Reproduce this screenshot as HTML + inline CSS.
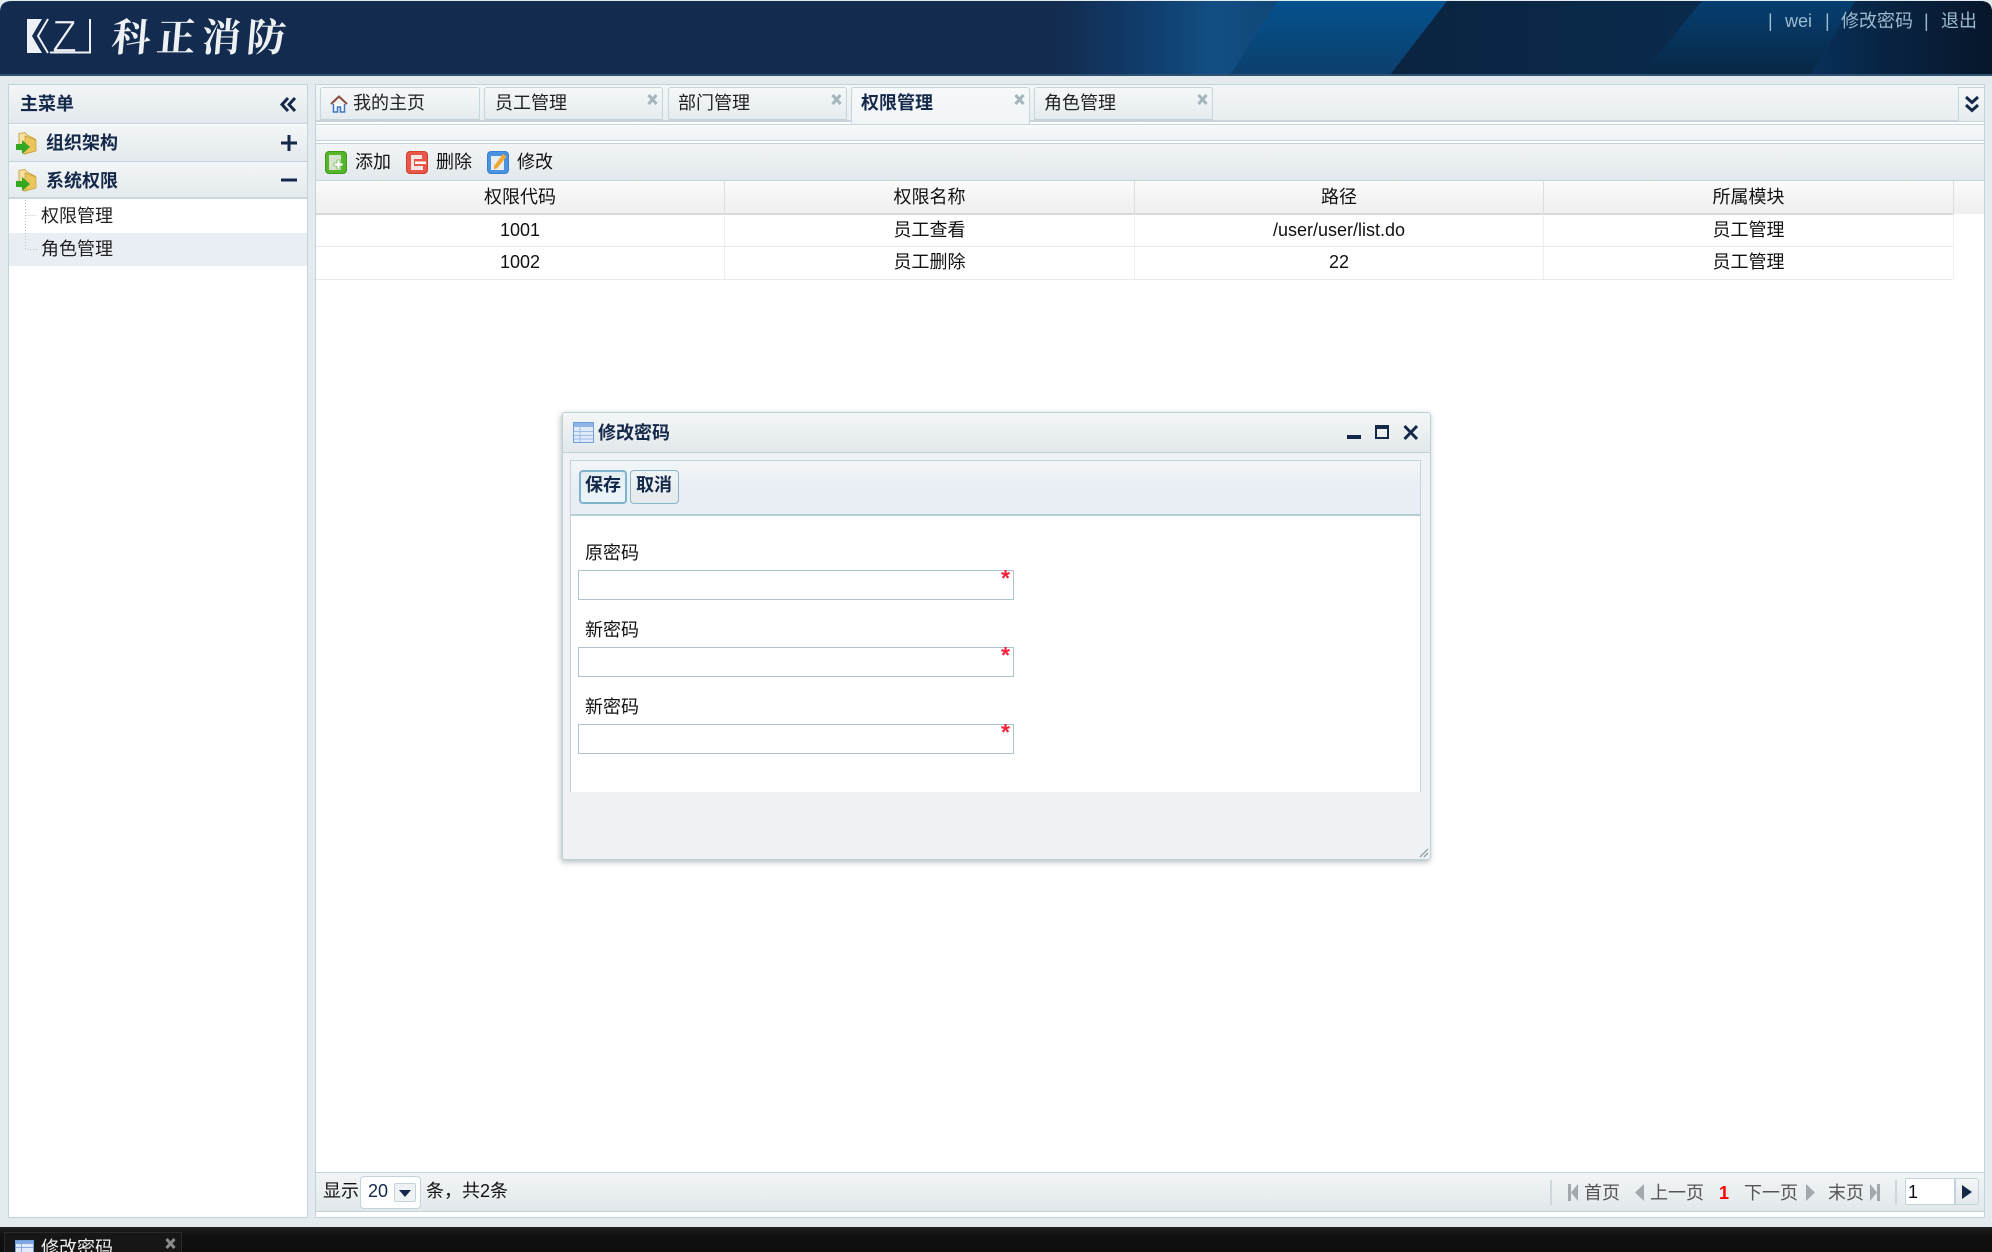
<!DOCTYPE html>
<html lang="zh">
<head>
<meta charset="utf-8">
<title>科正消防</title>
<style>
*{box-sizing:border-box}
html,body{margin:0;padding:0;width:1992px;height:1252px;overflow:hidden;background:#e4ebee}
body{position:relative;font-family:"Liberation Sans","Noto Sans CJK SC",sans-serif;font-size:18px;color:#111}
.a{position:absolute}
.t{position:absolute;white-space:nowrap;line-height:24px;height:24px}
.b{font-weight:bold;color:#14284a}
.c{text-align:center}
svg{position:absolute;display:block;overflow:visible}
.tab{position:absolute;top:87px;height:34px;border:1px solid #c6d5dc;border-bottom:2px solid #c3d2d9;border-radius:3px 3px 0 0;background:linear-gradient(#f5f8f9,#e5ebee)}
.tab.on{background:linear-gradient(#f6f9fa,#f1f5f7);height:37px;border-bottom:0}
.tab svg{top:6px;right:4px}
.req{position:absolute;color:#f5223c;font:bold 23px/23px "Liberation Sans",sans-serif}
.inp{position:absolute;left:578px;width:436px;height:30px;background:#fff;border:1px solid #aec4cb}
.lab{left:585px}
.g{color:#555}
</style>
</head>
<body>

<!-- Header -->
<svg style="left:0;top:0" width="1992" height="76" viewBox="0 0 1992 76">
<defs>
<linearGradient id="h1" x1="0" x2="1" y1="0" y2="0">
<stop offset="0" stop-color="#132b4e"/><stop offset=".53" stop-color="#132b4e"/><stop offset=".58" stop-color="#103f70"/><stop offset=".61" stop-color="#134f83"/><stop offset=".65" stop-color="#0e4474"/><stop offset="1" stop-color="#0e4474"/>
</linearGradient>
<linearGradient id="h2" x1="0" x2="0" y1="0" y2="1"><stop offset="0" stop-color="#04528f"/><stop offset="1" stop-color="#0c3f6c"/></linearGradient>
<linearGradient id="h3" x1="0" x2="1" y1="0" y2="0"><stop offset="0" stop-color="#0a2440"/><stop offset="1" stop-color="#0a2a4c"/></linearGradient>
<linearGradient id="h4" x1="0" x2="0" y1="0" y2="1"><stop offset="0" stop-color="#063f72"/><stop offset="1" stop-color="#082744"/></linearGradient>
<linearGradient id="h5" x1="0" x2="1" y1="0" y2="0"><stop offset="0" stop-color="#08305a"/><stop offset=".4" stop-color="#082443"/><stop offset="1" stop-color="#07162a"/></linearGradient>
</defs>
<path d="M0 76V12Q0 1 12 1H1980Q1992 1 1992 12V76Z" fill="url(#h1)"/>
<path d="M1278 1H1447L1390 75H1230Z" fill="url(#h2)"/>
<path d="M1447 1H1702L1642 75H1390Z" fill="url(#h3)"/>
<path d="M1702 1H1855L1810 75H1642Z" fill="url(#h4)"/>
<path d="M1855 1H1980Q1992 1 1992 12V75H1810Z" fill="url(#h5)"/>
<rect x="0" y="74" width="1992" height="2" fill="#2d5272"/>
</svg>

<!-- Logo -->
<svg style="left:27px;top:19px" width="64" height="35" viewBox="0 0 64 35">
<path d="M0 0H15L5 17L15 34H0Z" fill="#eef0f6"/>
<path d="M21 0L11 17L21 34" fill="none" stroke="#eef0f6" stroke-width="2"/>
<text x="25" y="33" font-family="Liberation Sans" font-size="45" fill="#eef0f6" stroke="#132b4e" stroke-width="1.2" textLength="25" lengthAdjust="spacingAndGlyphs">Z</text>
<path d="M23 33.5H63V0" fill="none" stroke="#eef0f6" stroke-width="2"/>
</svg>
<div class="t" style="left:112px;top:10px;height:50px;line-height:50px;font-family:'Noto Serif CJK SC',serif;font-weight:700;font-size:39px;letter-spacing:6px;color:#eef1f4;transform:skewX(-5deg)">科正消防</div>

<!-- Header links -->
<div class="t" style="left:1768px;top:9px;color:#9dbbd0">|</div>
<div class="t" style="left:1785px;top:9px;color:#9dbbd0">wei</div>
<div class="t" style="left:1825px;top:9px;color:#9dbbd0">|</div>
<div class="t" style="left:1841px;top:9px;color:#9dbbd0">修改密码</div>
<div class="t" style="left:1924px;top:9px;color:#9dbbd0">|</div>
<div class="t" style="left:1941px;top:9px;color:#9dbbd0">退出</div>

<!-- Left panel -->
<div class="a" style="left:8px;top:84px;width:300px;height:1134px;background:#fff;border:1px solid #c3d3da"></div>
<div class="a" style="left:9px;top:85px;width:298px;height:39px;background:linear-gradient(#f3f6f7,#e3e9ec);border-bottom:1px solid #c3d3da"></div>
<div class="t b" style="left:20px;top:92px">主菜单</div>
<svg style="left:279px;top:97px" width="19" height="15" viewBox="0 0 19 15"><path d="M9 1L3 7.5L9 14M16 1L10 7.5L16 14" fill="none" stroke="#14284a" stroke-width="3"/></svg>

<div class="a" style="left:9px;top:125px;width:298px;height:37px;background:linear-gradient(#f3f6f7,#e4eaed);border-bottom:1px solid #c3d3da"></div>
<div class="a" style="left:9px;top:162px;width:298px;height:37px;background:linear-gradient(#f3f6f7,#e4eaed);border-bottom:2px solid #c9d7dd"></div>
<svg style="left:16px;top:132px" width="22" height="23" viewBox="0 0 22 23"><path d="M3 1.5L9 .5L11 3L19 7V19L8 22L3 13Z" fill="#f6e3a2" stroke="#cda648"/><path d="M9 4L20 8V19L9 22Z" fill="#ebc65c" stroke="#c79a38" stroke-width=".7"/><path d="M0 12H6V8L14 15L6 22V18H0Z" fill="#34a821"/></svg>
<svg style="left:16px;top:169px" width="22" height="23" viewBox="0 0 22 23"><path d="M3 1.5L9 .5L11 3L19 7V19L8 22L3 13Z" fill="#f6e3a2" stroke="#cda648"/><path d="M9 4L20 8V19L9 22Z" fill="#ebc65c" stroke="#c79a38" stroke-width=".7"/><path d="M0 12H6V8L14 15L6 22V18H0Z" fill="#34a821"/></svg>
<div class="t b" style="left:46px;top:131px">组织架构</div>
<div class="t b" style="left:46px;top:169px">系统权限</div>
<svg style="left:281px;top:135px" width="16" height="16" viewBox="0 0 16 16"><path d="M0 8H16M8 0V16" stroke="#14284a" stroke-width="3"/></svg>
<svg style="left:281px;top:172px" width="16" height="16" viewBox="0 0 16 16"><path d="M0 8H16" stroke="#14284a" stroke-width="3"/></svg>

<div class="a" style="left:9px;top:233px;width:298px;height:33px;background:#e9eef4"></div>
<svg style="left:24px;top:200px" width="14" height="50" viewBox="0 0 14 50"><path d="M1.5 0V49.5H13M1.5 15.5H13" fill="none" stroke="#bbb" stroke-dasharray="1 2"/></svg>
<div class="t" style="left:41px;top:204px;color:#222">权限管理</div>
<div class="t" style="left:41px;top:237px;color:#222">角色管理</div>

<!-- Main panel -->
<div class="a" style="left:315px;top:84px;width:1670px;height:1134px;background:#fff;border:1px solid #c3d3da"></div>
<div class="a" style="left:316px;top:85px;width:1668px;height:36px;background:linear-gradient(#f3f6f7,#e8edf0)"></div>
<div class="a" style="left:316px;top:120px;width:1668px;height:2px;background:#c9d7dd"></div>
<div class="a" style="left:316px;top:122px;width:1668px;height:2px;background:#fff"></div>
<div class="a" style="left:316px;top:124px;width:1668px;height:1px;background:#c9d7dd"></div>
<div class="a" style="left:316px;top:125px;width:1668px;height:15px;background:linear-gradient(#f6f8f9,#f0f4f6)"></div>
<div class="a" style="left:316px;top:140px;width:1668px;height:1px;background:#c3d3da"></div>
<div class="a" style="left:316px;top:143px;width:1668px;height:38px;background:linear-gradient(#f2f5f6,#e3e9ec);border-top:1px solid #c3d3da;border-bottom:1px solid #c3d3da"></div>

<!-- Tabs -->
<div class="tab" style="left:320px;width:160px"></div>
<div class="tab" style="left:484px;width:179px"><svg width="11" height="11" viewBox="0 0 11 11"><path d="M1.5 1L9.5 10M9.5 1L1.5 10" stroke="#a3b6be" stroke-width="3"/></svg></div>
<div class="tab" style="left:668px;width:179px"><svg width="11" height="11" viewBox="0 0 11 11"><path d="M1.5 1L9.5 10M9.5 1L1.5 10" stroke="#a3b6be" stroke-width="3"/></svg></div>
<div class="tab on" style="left:851px;width:179px"><svg width="11" height="11" viewBox="0 0 11 11"><path d="M1.5 1L9.5 10M9.5 1L1.5 10" stroke="#a3b6be" stroke-width="3"/></svg></div>
<div class="tab" style="left:1034px;width:179px"><svg width="11" height="11" viewBox="0 0 11 11"><path d="M1.5 1L9.5 10M9.5 1L1.5 10" stroke="#a3b6be" stroke-width="3"/></svg></div>
<svg style="left:330px;top:95px" width="18" height="18" viewBox="0 0 18 18"><path d="M1 9L9 1.5L17 9" fill="none" stroke="#8c4a3c" stroke-width="2"/><path d="M3.5 9V17H7.5V12H10.5V17H14.5V9" fill="#fff" stroke="#3f78c0" stroke-width="1.6"/></svg>
<div class="t" style="left:353px;top:91px;color:#222">我的主页</div>
<div class="t" style="left:495px;top:91px;color:#222">员工管理</div>
<div class="t" style="left:678px;top:91px;color:#222">部门管理</div>
<div class="t b" style="left:861px;top:91px">权限管理</div>
<div class="t" style="left:1044px;top:91px;color:#222">角色管理</div>

<div class="a" style="left:1958px;top:87px;width:26px;height:34px;border:1px solid #c6d5dc;border-right:0;border-bottom:0;background:linear-gradient(#f5f8f9,#e5ebee)"></div>
<svg style="left:1964px;top:96px" width="16" height="17" viewBox="0 0 16 17"><path d="M2 1L8 6.5L14 1M2 9L8 14.5L14 9" fill="none" stroke="#14284a" stroke-width="3"/></svg>

<!-- Toolbar -->
<svg style="left:325px;top:151px" width="22" height="23" viewBox="0 0 22 23"><rect x=".5" y=".5" width="21" height="22" rx="3.5" fill="#55b62c" stroke="#3f9a1d"/><rect x="4" y="4" width="12" height="15" fill="#d5e2cd"/><path d="M9 12H12V9H15V12H18V15H15V18H12V15H9Z" fill="#fff" stroke="#4ca624" stroke-width=".6"/></svg>
<div class="t" style="left:355px;top:150px">添加</div>
<svg style="left:406px;top:151px" width="22" height="23" viewBox="0 0 22 23"><rect x=".5" y=".5" width="21" height="22" rx="3.5" fill="#e8574a" stroke="#d0402f"/><path d="M5 4H16V8H8V15H17V19H5Z" fill="#f8e6e2"/><path d="M9 10.5H20V13H9Z" fill="#fff"/></svg>
<div class="t" style="left:436px;top:150px">删除</div>
<svg style="left:487px;top:151px" width="22" height="23" viewBox="0 0 22 23"><rect x=".5" y=".5" width="21" height="22" rx="3.5" fill="#4a92e2" stroke="#3a7fd0"/><rect x="4" y="5" width="13" height="14" fill="#e8edf2"/><path d="M7 15L16 3L19.5 5.5L10 17.5L7 18Z" fill="#f0a830"/></svg>
<div class="t" style="left:517px;top:150px">修改</div>

<!-- Grid -->
<div class="a" style="left:316px;top:181px;width:1668px;height:33px;background:linear-gradient(#fbfbfb,#efefef)"></div>
<div class="a" style="left:316px;top:213px;width:1637px;height:2px;background:#d6d9da"></div>
<div class="a" style="left:724px;top:181px;width:1px;height:33px;background:#dcdfe0"></div>
<div class="a" style="left:1134px;top:181px;width:1px;height:33px;background:#dcdfe0"></div>
<div class="a" style="left:1543px;top:181px;width:1px;height:33px;background:#dcdfe0"></div>
<div class="a" style="left:1953px;top:181px;width:1px;height:33px;background:#dcdfe0"></div>
<div class="a" style="left:316px;top:246px;width:1637px;height:1px;background:#e8eaeb"></div>
<div class="a" style="left:316px;top:279px;width:1637px;height:1px;background:#e8eaeb"></div>
<div class="a" style="left:724px;top:214px;width:1px;height:65px;background:#eeeff0"></div>
<div class="a" style="left:1134px;top:214px;width:1px;height:65px;background:#eeeff0"></div>
<div class="a" style="left:1543px;top:214px;width:1px;height:65px;background:#eeeff0"></div>
<div class="a" style="left:1953px;top:214px;width:1px;height:65px;background:#eeeff0"></div>

<div class="t c" style="left:316px;width:408px;top:185px">权限代码</div>
<div class="t c" style="left:725px;width:409px;top:185px">权限名称</div>
<div class="t c" style="left:1135px;width:408px;top:185px">路径</div>
<div class="t c" style="left:1544px;width:409px;top:185px">所属模块</div>
<div class="t c" style="left:316px;width:408px;top:218px">1001</div>
<div class="t c" style="left:725px;width:409px;top:218px">员工查看</div>
<div class="t c" style="left:1135px;width:408px;top:218px">/user/user/list.do</div>
<div class="t c" style="left:1544px;width:409px;top:218px">员工管理</div>
<div class="t c" style="left:316px;width:408px;top:250px">1002</div>
<div class="t c" style="left:725px;width:409px;top:250px">员工删除</div>
<div class="t c" style="left:1135px;width:408px;top:250px">22</div>
<div class="t c" style="left:1544px;width:409px;top:250px">员工管理</div>

<!-- Pager -->
<div class="a" style="left:316px;top:1172px;width:1668px;height:40px;background:linear-gradient(#f2f5f6,#e2e8eb);border-top:1px solid #c3d3da;border-bottom:1px solid #c3d3da"></div>
<div class="t" style="left:323px;top:1179px">显示</div>
<div class="a" style="left:360px;top:1176px;width:61px;height:33px;background:#fff;border:1px solid #c3d3da;border-radius:4px"></div>
<div class="t" style="left:368px;top:1179px;color:#14284a">20</div>
<div class="a" style="left:394px;top:1183px;width:22px;height:19px;border:1px solid #c3d3da;border-radius:2px;background:#eef2f4"></div>
<svg style="left:399px;top:1190px" width="12" height="7" viewBox="0 0 12 7"><path d="M0 0H12L6 7Z" fill="#14284a"/></svg>
<div class="t" style="left:426px;top:1179px">条，共2条</div>

<div class="a" style="left:1550px;top:1180px;width:2px;height:25px;background:#ced8dc"></div>
<svg style="left:1568px;top:1184px" width="11" height="17" viewBox="0 0 11 17"><path d="M0 0H3V17H0ZM10 0V17L3 8.5Z" fill="#a2a8ab"/></svg>
<div class="t g" style="left:1584px;top:1181px">首页</div>
<svg style="left:1635px;top:1184px" width="10" height="17" viewBox="0 0 10 17"><path d="M9 0V17L0 8.5Z" fill="#a2a8ab"/></svg>
<div class="t g" style="left:1650px;top:1181px">上一页</div>
<div class="t" style="left:1719px;top:1181px;color:#f00;font-weight:bold">1</div>
<div class="t g" style="left:1744px;top:1181px">下一页</div>
<svg style="left:1805px;top:1184px" width="10" height="17" viewBox="0 0 10 17"><path d="M1 0V17L10 8.5Z" fill="#a2a8ab"/></svg>
<div class="t g" style="left:1828px;top:1181px">末页</div>
<svg style="left:1869px;top:1184px" width="11" height="17" viewBox="0 0 11 17"><path d="M11 0H8V17H11ZM1 0V17L8 8.5Z" fill="#a2a8ab"/></svg>
<div class="a" style="left:1895px;top:1180px;width:2px;height:25px;background:#ced8dc"></div>
<div class="a" style="left:1905px;top:1178px;width:50px;height:27px;background:#fff;border:1px solid #c3d3da"></div>
<div class="t" style="left:1908px;top:1180px">1</div>
<div class="a" style="left:1955px;top:1178px;width:24px;height:27px;background:linear-gradient(#f4f6f7,#e4e9ec);border:1px solid #c3d3da;border-radius:0 3px 3px 0"></div>
<svg style="left:1962px;top:1185px" width="10" height="14" viewBox="0 0 10 14"><path d="M0 0V14L10 7Z" fill="#14284a"/></svg>

<!-- Dialog -->
<div class="a" style="left:562px;top:412px;width:869px;height:448px;background:#eff2f4;border:1px solid #bfd0d6;border-radius:3px;box-shadow:-1px 2px 6px rgba(100,120,125,.5)"></div>
<div class="a" style="left:563px;top:413px;width:867px;height:40px;background:linear-gradient(#f4f7f7,#e2e8eb);border-bottom:1px solid #bfd0d6;border-radius:2px 2px 0 0"></div>
<svg style="left:573px;top:422px" width="21" height="21" viewBox="0 0 21 21"><rect x=".5" y=".5" width="20" height="20" fill="#dfe9f8" stroke="#6f9edc"/><rect x="1" y="1" width="19" height="4" fill="#8fb5e6"/><path d="M7 5V20M1 9.5H20M1 13.5H20M1 17H20" stroke="#9dbde8"/></svg>
<div class="t b" style="left:598px;top:421px">修改密码</div>
<svg style="left:1347px;top:425px" width="72" height="15" viewBox="0 0 72 15"><rect x="0" y="10" width="14" height="4" fill="#14284a"/><rect x="29" y="1" width="12" height="12" fill="none" stroke="#14284a" stroke-width="2"/><rect x="28" y="0" width="14" height="4" fill="#14284a"/><path d="M57.5 1L70 14M70 1L57.5 14" stroke="#14284a" stroke-width="3"/></svg>

<div class="a" style="left:570px;top:460px;width:851px;height:332px;background:#fff;border:1px solid #c3d3da;border-bottom:0"></div>
<div class="a" style="left:571px;top:461px;width:849px;height:55px;background:linear-gradient(#f3f6f7 0,#e9eef5 55%,#e9eef5 100%);border-bottom:2px solid #b6cdd2"></div>

<div class="a" style="left:579px;top:470px;width:48px;height:34px;border:2px solid #7fb4cc;border-radius:4px;background:linear-gradient(#e4eef2,#eaf6fb)"></div>
<div class="a" style="left:630px;top:470px;width:49px;height:34px;border:1px solid #88b6ca;border-radius:4px;background:linear-gradient(#f0f4f6,#e3e9ec)"></div>
<div class="t b" style="left:585px;top:473px">保存</div>
<div class="t b" style="left:636px;top:473px">取消</div>

<div class="t lab" style="top:541px">原密码</div>
<div class="inp" style="top:570px"></div>
<div class="req" style="left:1001px;top:567px">*</div>
<div class="t lab" style="top:618px">新密码</div>
<div class="inp" style="top:647px"></div>
<div class="req" style="left:1001px;top:644px">*</div>
<div class="t lab" style="top:695px">新密码</div>
<div class="inp" style="top:724px"></div>
<div class="req" style="left:1001px;top:721px">*</div>

<svg style="left:1419px;top:848px" width="10" height="10" viewBox="0 0 10 10"><path d="M1 9L9 1M5 9L9 5" stroke="#9aa6aa" stroke-width="1.5"/></svg>

<!-- Bottom bar -->
<div class="a" style="left:0;top:1227px;width:1992px;height:25px;background:linear-gradient(#222,#111 30%,#0e0e0e)"></div>
<div class="a" style="left:4px;top:1232px;width:178px;height:20px;background:#161616;border:1px solid #2a2a2a;border-bottom:0"></div>
<svg style="left:15px;top:1240px" width="19" height="12" viewBox="0 0 19 12"><rect x=".5" y=".5" width="18" height="14" fill="#dfe9f8" stroke="#6f9edc"/><rect x="1" y="1" width="17" height="3" fill="#7ea8e0"/><path d="M6.5 4V12M1 7.5H18" stroke="#86abe2"/></svg>
<div class="a" style="left:41px;top:1236px;width:72px;height:16px;overflow:hidden"><div style="line-height:24px;color:#f0f0f0;white-space:nowrap">修改密码</div></div>
<svg style="left:165px;top:1238px" width="11" height="11" viewBox="0 0 11 11"><path d="M1.5 1L9.5 10M9.5 1L1.5 10" stroke="#8a8a8a" stroke-width="3"/></svg>

</body>
</html>
